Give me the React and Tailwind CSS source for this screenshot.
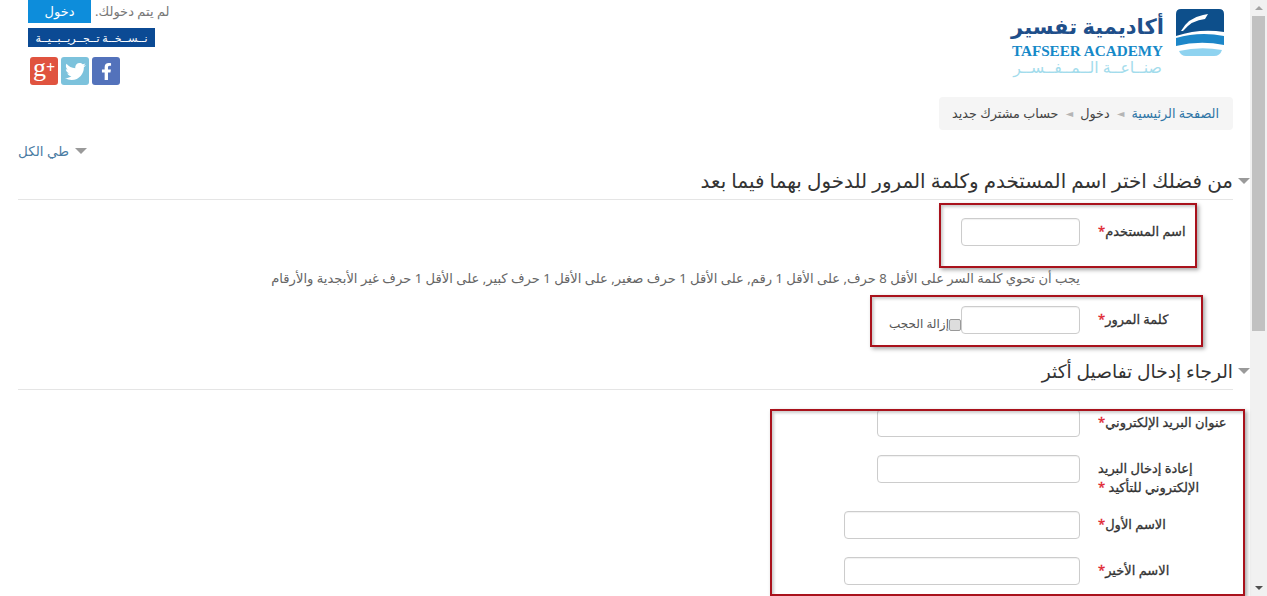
import React from "react";
import { FaFacebookF, FaTwitter } from "react-icons/fa";

const font = "font-['Noto_Sans','DejaVu_Sans',sans-serif]";

function Caret({ className = "" }) {
  return <span className={"inline-block w-0 h-0 border-x-[6px] border-x-transparent border-t-[6px] border-t-[#9a9a9a] " + className} />;
}

function Field({ label, inputW = "w-[119px]", children, className = "" }) {
  return (
    <div className={"flex items-start " + className}>
      <label className="w-[135px] shrink-0 text-left text-[13px] leading-[19px] font-normal text-[#333333] [-webkit-text-stroke:0.3px_#333333] pt-[4px] whitespace-nowrap">
        {label}
        <span className="text-[#e0232e] [-webkit-text-stroke:0.3px_#e0232e]">*</span>
      </label>
      <div className="mr-[18px] flex items-center">
        <div className={inputW + " h-[28px] border border-[#cccccc] rounded-[4px] bg-white shadow-[inset_0_1px_1px_rgba(0,0,0,0.06)]"} />
        {children}
      </div>
    </div>
  );
}

function Section({ title, className = "", textClass = "", caretClass = "" }) {
  return (
    <div className={"relative border-b border-[#e5e5e5] " + className}>
      <h2 className={"font-normal text-[#333333] whitespace-nowrap " + textClass}>{title}</h2>
      <Caret className={"absolute right-[-17px] " + caretClass} />
    </div>
  );
}

function Logo() {
  return (
    <div className="flex items-start gap-[13px] pt-[9px]" dir="ltr">
      <div className="flex flex-col items-center w-[151px]">
        <div dir="rtl" className="text-[#1f4f8a] text-[21px] leading-[34px] whitespace-nowrap font-bold">أكاديمية تفسير</div>
        <div className="text-[#1689c8] text-[15.2px] leading-[16px] font-bold font-['Liberation_Serif',serif] whitespace-nowrap">TAFSEER ACADEMY</div>
        <div dir="rtl" className="mt-[1px] text-[#a3dcec] text-[15.7px] leading-[14px] whitespace-nowrap">صنــاعــة الــمــفــســر</div>
      </div>
      <svg width="48" height="48" viewBox="0 0 48 48">
        <path d="M5 0H43Q48 0 48 5V23Q24 19 0 27V5Q0 0 5 0Z" fill="#0d4f8b" />
        <path d="M5 22Q12 9 27 6L32 5L29 10Q16 11 7 22Z" fill="#ffffff" />
        <path d="M0 29Q24 22 48 27V36Q24 31 0 37Z" fill="#1c86c8" />
        <path d="M3 42Q24 37 46 41Q44 47 38 47H10Q5 47 3 42Z" fill="#8fd3f0" />
      </svg>
    </div>
  );
}

export default function App() {
  return (
    <div className={"relative w-[1267px] h-[596px] overflow-hidden flex bg-white " + font} dir="ltr">
      <main dir="rtl" className="w-[1250px] h-[596px] overflow-hidden pr-[17px] pl-[18px] text-[#555555]">
        <header className="flex justify-between h-[97px]">
          <div className="mr-[9px]"><Logo /></div>
          <div dir="ltr" className="ml-[10px] flex flex-col items-start w-[152px]">
            <div className="flex items-start gap-[4px]">
              <span className="w-[63px] h-[23px] bg-[#0d8ddb] text-white text-[13px] leading-[22px] text-center">دخول</span>
              <span dir="rtl" className="text-[13px] leading-[22px] text-[#777777] whitespace-nowrap">لم يتم دخولك.</span>
            </div>
            <div dir="rtl" className="mt-[5px] w-[127px] h-[19px] bg-[#0b4a94] text-white text-[11px] leading-[19px] text-center whitespace-nowrap overflow-hidden">نــســخــة تــجــريــبــيــة</div>
            <div className="mt-[10px] ml-[2px] flex gap-[3px]">
              <span className="w-[28px] h-[28px] rounded-[3px] bg-[#e0533f] text-white flex items-center justify-center font-['Liberation_Serif',serif] text-[26px] leading-[28px] pb-[6px]">g<span className="text-[16px] leading-[16px] font-bold">+</span></span>
              <span className="w-[28px] h-[28px] rounded-[3px] bg-[#7cc2dc] text-white flex items-center justify-center"><FaTwitter size={21} /></span>
              <span className="w-[28px] h-[28px] rounded-[3px] bg-[#5372bb] text-white flex items-center justify-center"><FaFacebookF size={17} /></span>
            </div>
          </div>
        </header>

        <nav className="w-[294px] h-[33px] bg-[#f5f5f5] rounded-[4px] px-[14px] flex items-center gap-[7px] text-[12.8px] whitespace-nowrap">
          <span className="text-[#2f76a6]">الصفحة الرئيسية</span>
          <span className="text-[#b5b5b5] text-[10px]">◄</span>
          <span className="text-[#444444]">دخول</span>
          <span className="text-[#b5b5b5] text-[10px]">◄</span>
          <span className="text-[#444444]">حساب مشترك جديد</span>
        </nav>

        <div className="h-[20px] mt-[11px] flex justify-end items-center gap-[6px] text-[13.5px] text-[#4b7ca3]">
          <Caret />
          <span>طي الكل</span>
        </div>

        <Section title="من فضلك اختر اسم المستخدم وكلمة المرور للدخول بهما فيما بعد" className="mt-[9px] h-[30px]" textClass="text-[19.9px] leading-[22px]" caretClass="top-[8px]" />

        <Field label="اسم المستخدم" className="mt-[18px]" />
        <p className="mt-[22px] mr-[153px] text-[13.1px] leading-[20px] text-[#666666] whitespace-nowrap">يجب أن تحوي كلمة السر على الأقل 8 حرف, على الأقل 1 رقم, على الأقل 1 حرف صغير, على الأقل 1 حرف كبير, على الأقل 1 حرف غير الأبجدية والأرقام</p>
        <Field label="كلمة المرور" className="mt-[18px]">
          <input type="checkbox" readOnly className="appearance-none m-0 w-[12px] h-[12px] mt-[9px] bg-[#dddddd] border border-[#999999] rounded-[2px]" />
          <span className="text-[12px] mt-[8px] text-[#555555] whitespace-nowrap">إزالة الحجب</span>
        </Field>

        <Section title="الرجاء إدخال تفاصيل أكثر" className="mt-[22px] h-[34px]" textClass="text-[18.6px] leading-[30px]" caretClass="top-[12px]" />

        <Field label="عنوان البريد الإلكتروني" inputW="w-[203px]" className="mt-[19px]" />
        <Field label={<>إعادة إدخال البريد<br />الإلكتروني للتأكيد </>} inputW="w-[203px]" className="mt-[18px] h-[56px]" />
        <Field label="الاسم الأول" inputW="w-[236px]" />
        <Field label="الاسم الأخير" inputW="w-[236px]" className="mt-[18px]" />
      </main>

      <aside className="w-[17px] h-[596px] bg-[#f1f1f1] flex flex-col items-center justify-between relative">
        <span className="mt-[6px] w-0 h-0 border-x-[4px] border-x-transparent border-b-[4px] border-b-[#a3a3a3]" />
        <div className="absolute top-[16px] left-[2px] w-[13px] h-[315px] bg-[#c1c1c1]" />
        <span className="mb-[6px] w-0 h-0 border-x-[4px] border-x-transparent border-t-[4px] border-t-[#505050]" />
      </aside>

      <div className="absolute left-[939px] top-[203px] w-[258px] h-[65px] border-2 border-[#a9121c] shadow-[2px_2px_4px_rgba(0,0,0,0.35),inset_2px_2px_3px_rgba(0,0,0,0.2)]" />
      <div className="absolute left-[870px] top-[295px] w-[333px] h-[52px] border-2 border-[#a9121c] shadow-[2px_2px_4px_rgba(0,0,0,0.35),inset_2px_2px_3px_rgba(0,0,0,0.2)]" />
      <div className="absolute left-[770px] top-[409px] w-[475px] h-[187px] border-2 border-[#a9121c] shadow-[2px_2px_4px_rgba(0,0,0,0.35),inset_2px_2px_3px_rgba(0,0,0,0.2)]" />
    </div>
  );
}
